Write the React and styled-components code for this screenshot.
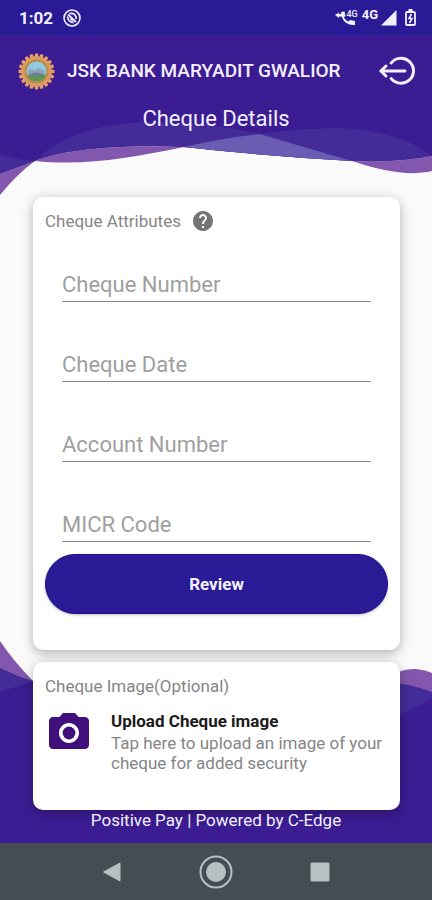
import React, { useState } from 'react';
import styled, { createGlobalStyle } from 'styled-components';

const GlobalStyle = createGlobalStyle`
  * {
    box-sizing: border-box;
  }

  body {
    margin: 0;
    background: #fafafa;
    font-family: Roboto, 'Liberation Sans', sans-serif;
  }

  button,
  input {
    font-family: inherit;
  }

  svg {
    flex-shrink: 0;
  }
`;

const Screen = styled.div`
  display: flex;
  flex-direction: column;
  min-height: 100vh;
`;

const StatusBar = styled.div`
  display: flex;
  align-items: center;
  justify-content: space-between;
  height: 35px;
  padding: 0 16px 0 19px;
  background: #2a1a96;
  color: #f2f0ff;
`;

const StatusGroup = styled.div`
  display: flex;
  align-items: center;
  gap: ${p => p.$gap}px;
`;

const Clock = styled.span`
  font-size: 17px;
  font-weight: 700;
  line-height: 20px;
`;

const Network = styled.span`
  font-size: 13px;
  font-weight: 700;
  line-height: 12px;
  padding-bottom: 6px;
`;

const Body = styled.div`
  position: relative;
  display: flex;
  flex-direction: column;
  flex: 1;
  background: #fafafa;
`;

const Wave = styled.svg`
  position: absolute;
  left: 0;
  ${p => p.$edge}: 0;
  width: 100%;
  height: ${p => p.$height}px;
`;

const Header = styled.header`
  position: relative;
  height: 162px;
  color: #f2f0ff;
`;

const TitleBar = styled.div`
  display: flex;
  align-items: center;
  height: 72px;
  padding: 0 16px 0 18px;
`;

const BankName = styled.h1`
  flex: 1;
  margin: 0 0 0 12px;
  font-size: 19px;
  font-weight: 500;
  line-height: 24px;
  white-space: nowrap;
`;

const PageTitle = styled.h2`
  margin: 0;
  font-size: 22px;
  font-weight: 400;
  line-height: 24px;
  text-align: center;
`;

const IconButton = styled.button`
  display: flex;
  padding: 0;
  border: 0;
  background: none;
  color: inherit;
  cursor: pointer;
`;

const Content = styled.main`
  position: relative;
  display: flex;
  flex-direction: column;
  gap: 12px;
  padding: 0 32px 0 33px;
`;

const Card = styled.section`
  padding: 12px;
  border-radius: 10px;
  background: #fff;
  box-shadow: 0 3px 12px rgba(0, 0, 0, 0.3);
`;

const CardTitle = styled.h3`
  display: flex;
  align-items: center;
  gap: 10px;
  margin: 0;
  font-size: 17px;
  font-weight: 400;
  line-height: 24px;
  color: #858585;
`;

const Fields = styled.div`
  display: flex;
  flex-direction: column;
  gap: 40px;
  padding: 29px 17px 12px;
`;

const Field = styled.input`
  display: block;
  width: 100%;
  height: 40px;
  padding: 6px 0 0;
  border: 0;
  border-bottom: 1px solid #8a8a8a;
  border-radius: 0;
  outline: 0;
  background: none;
  font-size: 22px;
  color: #333;

  &::placeholder {
    color: #a0a0a0;
    opacity: 1;
  }

  &:focus {
    border-bottom-color: #2a1a96;
  }
`;

const ReviewButton = styled.button`
  display: block;
  width: 100%;
  height: 60px;
  margin-bottom: 24px;
  border: 1px solid #1c0e8c;
  border-radius: 30px;
  background: #2a1a96;
  box-shadow: 0 1px 3px rgba(0, 0, 0, 0.25);
  font-size: 17px;
  font-weight: 700;
  color: #f5f3ff;
  cursor: pointer;
`;

const Upload = styled.button`
  display: flex;
  align-items: flex-start;
  gap: 18px;
  width: 100%;
  margin-bottom: 25px;
  padding: 11px 0 0;
  border: 0;
  background: none;
  text-align: left;
  cursor: pointer;
`;

const UploadText = styled.span`
  display: flex;
  flex-direction: column;
`;

const UploadTitle = styled.span`
  font-size: 17px;
  font-weight: 700;
  line-height: 24px;
  color: #1b1b1b;
`;

const UploadHint = styled.span`
  font-size: 17px;
  line-height: 20px;
  color: #858585;
`;

const PoweredBy = styled.footer`
  position: relative;
  height: 33px;
  font-size: 17px;
  line-height: 20px;
  text-align: center;
  color: #f2f0ff;
`;

const NavBar = styled.nav`
  display: flex;
  align-items: center;
  justify-content: center;
  gap: 76px;
  height: 57px;
  background: #454d52;
  color: #b9c0c2;
`;

const fields = ['Cheque Number', 'Cheque Date', 'Account Number', 'MICR Code'];

function TopWave() {
  return (
    <Wave
      $edge="top"
      $height={165}
      viewBox="0 35 432 165"
      preserveAspectRatio="none"
      aria-hidden="true"
    >
      <path
        fill="#3b1c92"
        d="M0 35H432V156Q398 163 352 161Q265 156 184 147C110 144 60 151 35 161L0 174Z"
      />
      <path
        fill="#432c98"
        d="M0 154Q17 160 35 161L0 174ZM35 161Q75 121 158 122Q208 122 260 134Q300 128 340 128Q398 130 432 156Q398 163 352 161Q265 156 184 147C110 144 60 151 35 161Z"
      />
      <path
        fill="#8457ae"
        d="M0 174L35 161Q18 173 0 195ZM35 161C60 151 110 144 184 147C130 158 85 166 35 161ZM352 161Q398 163 432 156V171C410 176 385 172 352 161Z"
      />
      <path
        fill="#6a5cb2"
        d="M184 147Q222 138 260 134Q310 149 352 161Q265 156 184 147Z"
      />
    </Wave>
  );
}

function BottomWave() {
  return (
    <Wave
      $edge="bottom"
      $height={202}
      viewBox="0 641 432 202"
      preserveAspectRatio="none"
      aria-hidden="true"
    >
      <path
        fill="#8457ae"
        d="M0 641Q15 663 33 681H380Q400 668 416 669Q426 670 432 673V720H0Z"
      />
      <path
        fill="#432c98"
        d="M0 668Q16 676 33 681H380Q408 683 432 692V730H0Z"
      />
      <path fill="#3b1c92" d="M0 692L33 681H300L400 714Q418 707 432 698V843H0Z" />
    </Wave>
  );
}

function DndIcon() {
  return (
    <svg width="18" height="18" viewBox="0 0 18 18" fill="none" stroke="currentColor">
      <circle cx="9" cy="9" r="8" strokeWidth="1.6" />
      <path d="M5 5.5L13 13" strokeWidth="1.8" />
      <path d="M6.500 4.500Q13 3.500 13.300 10M4.500 7.500Q5 13 10.500 13.500M7.500 9.500Q8 11 10 11" strokeWidth="1.8" />
    </svg>
  );
}

function CallIcon() {
  return (
    <svg width="24" height="20" viewBox="0 0 24 20" fill="currentColor">
      <path d="M0 7L4 4.500V6H7V8.500H4V10Z" />
      <path d="M6 4L9.500 3.500L10.500 8L8.800 9.500Q10.500 12.500 13.500 13.500L15 12L20 13V17Q13 17.500 9 13Q6 9 6 4Z" />
      <text x="11.500" y="9" fontSize="9" fontWeight="500" fontFamily="Roboto, sans-serif">
        4G
      </text>
    </svg>
  );
}

function SignalIcon() {
  return (
    <svg width="16" height="16" viewBox="0 0 16 16" fill="currentColor">
      <path d="M15.500 0V15.500H0Z" />
    </svg>
  );
}

function BatteryIcon() {
  return (
    <svg width="11" height="17" viewBox="0 0 11 17" fill="none" stroke="currentColor">
      <path d="M3.500 1.200H7.500" strokeWidth="2.400" />
      <rect x="1" y="3" width="9" height="13" rx="1" strokeWidth="1.800" />
      <path d="M6.500 5L4 9.500H7L4.500 14" strokeWidth="1.600" />
    </svg>
  );
}

function BankLogo() {
  const teeth = Array.from({ length: 20 }, (_, i) => i * 18);
  return (
    <svg width="37" height="37" viewBox="-18.500 -18.500 37 37" role="img" aria-label="JSK Bank">
      {teeth.map(angle => (
        <path
          key={angle}
          d="M-2.200 -14L-1.500 -18H1.500L2.200 -14Z"
          fill="#e0a068"
          transform={`rotate(${angle})`}
        />
      ))}
      <circle r="15" fill="#dc9a5f" />
      <circle r="11" fill="none" stroke="#b98a4a" strokeWidth="2" />
      <circle r="10" fill="#8ecbe0" />
      <path d="M-9.500 3H9.500A10 10 0 0 1 -9.500 3Z" fill="#5f9450" />
      <path d="M-8.500 3V-1L-5 -3L-2 -1L2 -4L6 -2L8.500 0V3Z" fill="#8fa3b8" />
      <path d="M-7 3Q0 -1 7 3V4H-7Z" fill="#6a7d9c" />
    </svg>
  );
}

function LogoutIcon() {
  return (
    <svg
      width="38"
      height="30"
      viewBox="0 0 38 30"
      fill="none"
      stroke="currentColor"
      strokeWidth="3"
    >
      <path d="M12.500 8A12.500 12.500 0 1 1 12.500 21.500" />
      <path d="M3 15H27" strokeLinecap="round" />
      <path d="M8 10L3 15L8 20" strokeLinecap="round" strokeLinejoin="round" />
    </svg>
  );
}

function HelpIcon() {
  return (
    <svg width="24" height="24" viewBox="0 0 24 24" fill="#757575">
      <path d="M12 2C6.480 2 2 6.480 2 12s4.480 10 10 10 10-4.480 10-10S17.520 2 12 2zm1 17h-2v-2h2v2zm2.070-7.750l-.9.920C13.450 12.900 13 13.500 13 15h-2v-.5c0-1.100.45-2.100 1.170-2.830l1.240-1.260c.37-.36.59-.86.59-1.410 0-1.100-.9-2-2-2s-2 .9-2 2H8c0-2.210 1.790-4 4-4s4 1.790 4 4c0 .88-.36 1.680-.93 2.250z" />
    </svg>
  );
}

function CameraIcon() {
  return (
    <svg width="48" height="48" viewBox="0 0 24 24" fill="#3f0f7c">
      <circle cx="12" cy="12" r="3.200" />
      <path d="M9 2L7.170 4H4c-1.100 0-2 .9-2 2v12c0 1.100.9 2 2 2h16c1.100 0 2-.9 2-2V6c0-1.100-.9-2-2-2h-3.170L15 2H9zm3 15c-2.760 0-5-2.240-5-5s2.240-5 5-5 5 2.240 5 5-2.240 5-5 5z" />
    </svg>
  );
}

export default function App() {
  const [values, setValues] = useState({});
  return (
    <Screen>
      <GlobalStyle />
      <StatusBar>
        <StatusGroup $gap={10}>
          <Clock>1:02</Clock>
          <DndIcon />
        </StatusGroup>
        <StatusGroup $gap={8}>
          <StatusGroup $gap={3}>
            <CallIcon />
            <Network>4G</Network>
            <SignalIcon />
          </StatusGroup>
          <BatteryIcon />
        </StatusGroup>
      </StatusBar>
      <Body>
        <TopWave />
        <BottomWave />
        <Header>
          <TitleBar>
            <BankLogo />
            <BankName>JSK BANK MARYADIT GWALIOR</BankName>
            <IconButton type="button" aria-label="Log out">
              <LogoutIcon />
            </IconButton>
          </TitleBar>
          <PageTitle>Cheque Details</PageTitle>
        </Header>
        <Content>
          <Card>
            <CardTitle>
              Cheque Attributes
              <IconButton type="button" aria-label="Help">
                <HelpIcon />
              </IconButton>
            </CardTitle>
            <Fields>
              {fields.map(name => (
                <Field
                  key={name}
                  type="text"
                  placeholder={name}
                  aria-label={name}
                  value={values[name] || ''}
                  onChange={e => setValues({ ...values, [name]: e.target.value })}
                />
              ))}
            </Fields>
            <ReviewButton type="button">Review</ReviewButton>
          </Card>
          <Card>
            <CardTitle>Cheque Image(Optional)</CardTitle>
            <Upload type="button">
              <CameraIcon />
              <UploadText>
                <UploadTitle>Upload Cheque image</UploadTitle>
                <UploadHint>
                  Tap here to upload an image of your cheque for added security
                </UploadHint>
              </UploadText>
            </Upload>
          </Card>
        </Content>
        <PoweredBy>Positive Pay | Powered by C-Edge</PoweredBy>
      </Body>
      <NavBar>
        <IconButton type="button" aria-label="Back">
          <svg width="20" height="22" viewBox="0 0 20 22" fill="currentColor">
            <path d="M1.500 11L18 2V20Z" stroke="currentColor" strokeLinejoin="round" />
          </svg>
        </IconButton>
        <IconButton type="button" aria-label="Home">
          <svg width="36" height="36" viewBox="0 0 36 36">
            <circle cx="18" cy="18" r="15.500" fill="none" stroke="currentColor" strokeWidth="2" />
            <circle cx="18" cy="18" r="10" fill="currentColor" />
          </svg>
        </IconButton>
        <IconButton type="button" aria-label="Recent apps">
          <svg width="20" height="20" viewBox="0 0 20 20" fill="currentColor">
            <rect x="0.500" y="0.500" width="19" height="19" rx="1.500" />
          </svg>
        </IconButton>
      </NavBar>
    </Screen>
  );
}
